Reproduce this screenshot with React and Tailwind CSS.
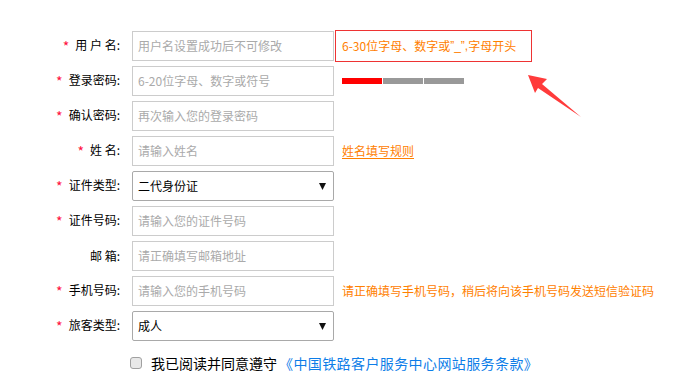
import React from "react";

const font = { fontFamily: '"Noto Sans CJK SC", "Noto Sans", sans-serif' };

function Label({ req, children }) {
  return (
    <div className="w-[120px] shrink-0 text-right text-[12px] text-black whitespace-pre leading-none">
      {req && <span className="text-[#ff1040] text-[14px] align-top mr-[6px]">*</span>}
      {children}
    </div>
  );
}

function Input({ placeholder }) {
  return (
    <div className="ml-[12px] w-[202px] h-[30px] shrink-0 border border-[#cccccc] bg-white flex items-center pl-[5px] text-[12px] text-[#aaaaaa]">
      {placeholder}
    </div>
  );
}

function Select({ value }) {
  return (
    <div className="ml-[12px] w-[202px] h-[30px] shrink-0 border border-[#a9a9a9] rounded-[2px] bg-white flex items-center justify-between pl-[5px] pr-[7px] text-[12px] text-black">
      <span>{value}</span>
      <svg width="7" height="7" viewBox="0 0 7 7">
        <polygon points="0,0 7,0 3.5,7" fill="#111" />
      </svg>
    </div>
  );
}

function Row({ label, req, children, extra }) {
  return (
    <div className="flex items-center h-[30px]">
      <Label req={req}>{label}</Label>
      {children}
      {extra}
    </div>
  );
}

export default function App() {
  return (
    <div className="relative w-[675px] h-[387px] bg-white overflow-hidden" style={font}>
      <div className="flex flex-col gap-[5px] pt-[31px]">
        <Row
          label="用 户 名:"
          req
          extra={
            <div className="ml-[1px] h-[32px] w-[197px] border border-[#ee3333] flex items-center pl-[6px] text-[12px] text-[#ff8000] whitespace-nowrap">
              6-30位字母、数字或<span className="font-['Liberation_Sans']">”_”,</span>字母开头
            </div>
          }
        >
          <Input placeholder="用户名设置成功后不可修改" />
        </Row>
        <Row
          label="登录密码:"
          req
          extra={
            <div className="ml-[8px] flex gap-[1px]">
              <div className="w-[40px] h-[6px] bg-[#ff0000]" />
              <div className="w-[40px] h-[6px] bg-[#999999]" />
              <div className="w-[40px] h-[6px] bg-[#999999]" />
            </div>
          }
        >
          <Input placeholder="6-20位字母、数字或符号" />
        </Row>
        <Row label="确认密码:" req>
          <Input placeholder="再次输入您的登录密码" />
        </Row>
        <Row
          label="姓 名:"
          req
          extra={
            <span className="ml-[8px] text-[12px] text-[#ff8000] underline underline-offset-2">姓名填写规则</span>
          }
        >
          <Input placeholder="请输入姓名" />
        </Row>
        <Row label="证件类型:" req>
          <Select value="二代身份证" />
        </Row>
        <Row label="证件号码:" req>
          <Input placeholder="请输入您的证件号码" />
        </Row>
        <Row label="邮 箱:">
          <Input placeholder="请正确填写邮箱地址" />
        </Row>
        <Row
          label="手机号码:"
          req
          extra={
            <span className="ml-[8px] text-[12px] text-[#ff8000] whitespace-nowrap">
              请正确填写手机号码，稍后将向该手机号码发送短信验证码
            </span>
          }
        >
          <Input placeholder="请输入您的手机号码" />
        </Row>
        <Row label="旅客类型:" req>
          <Select value="成人" />
        </Row>
      </div>
      <div className="flex items-center mt-[12px] pl-[130px] h-[20px]">
        <div className="w-[12px] h-[12px] rounded-[3px] border border-[#a0a0a0] bg-[#e8e8e8]" />
        <span className="ml-[9px] text-[14px] text-black whitespace-nowrap">我已阅读并同意遵守</span>
        <span className="ml-[2px] text-[14px] tracking-[0.4px] text-[#0d7de8] whitespace-nowrap">《中国铁路客户服务中心网站服务条款》</span>
      </div>
      <svg className="absolute left-0 top-0" width="675" height="387" viewBox="0 0 675 387">
        <polygon points="528,75 547,79 542,84 581,117 538,88 535,93" fill="#ff3b3b" />
      </svg>
    </div>
  );
}
